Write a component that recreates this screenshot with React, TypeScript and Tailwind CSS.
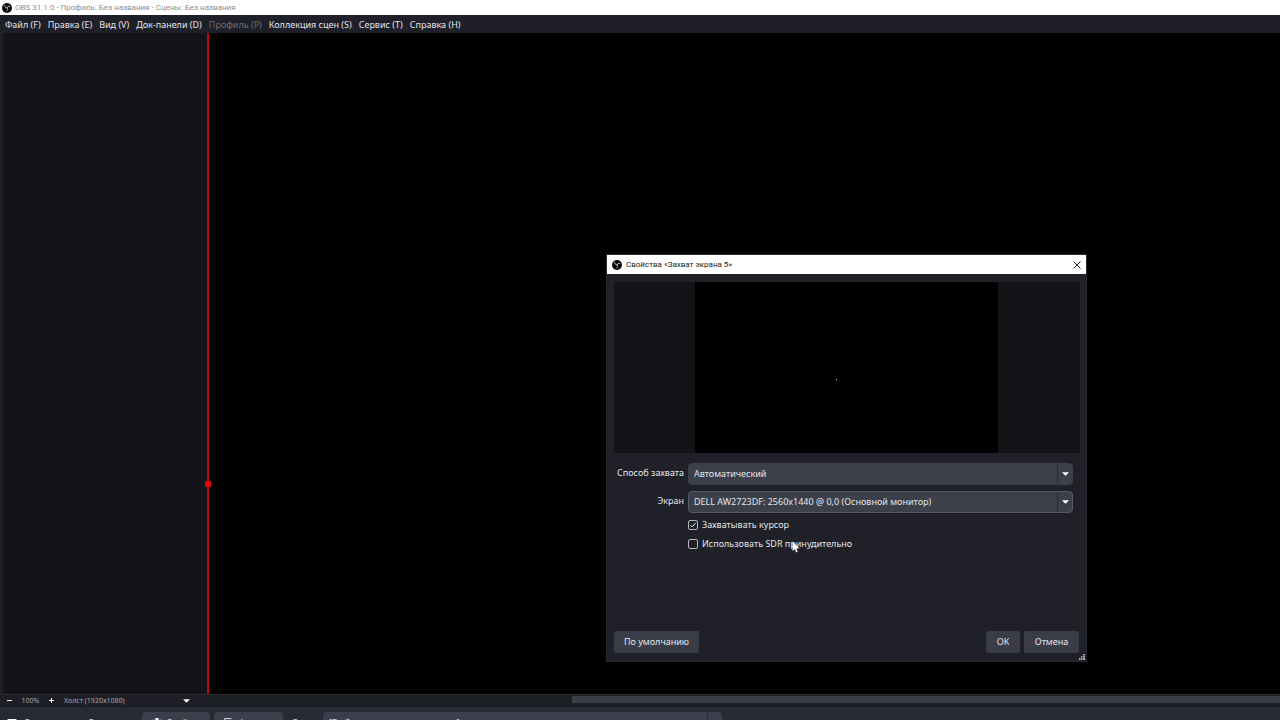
import type { ReactNode } from 'react';

const menuItems = [
  { label: 'Файл (F)' },
  { label: 'Правка (E)' },
  { label: 'Вид (V)' },
  { label: 'Док-панели (D)' },
  { label: 'Профиль (P)', disabled: true },
  { label: 'Коллекция сцен (S)' },
  { label: 'Сервис (T)' },
  { label: 'Справка (H)' },
];

function ObsLogo() {
  return (
    <svg viewBox="0 0 20 20" className="size-[10px] shrink-0" aria-hidden="true">
      <circle cx="10" cy="10" r="10" fill="#0a0a0c" />
      <g fill="none" stroke="#c4c4c6" strokeWidth="1.8" strokeLinecap="round">
        <path d="M5.500 5c-.2 3 1.500 4.700 4.500 4.700" />
        <path d="M15.500 7c-2.800-1-4.800-.1-5.500 2.700" />
        <path d="M9.500 15.500c2.300-1.400 2.500-3.600.5-5.800" />
      </g>
    </svg>
  );
}

function CaretDown() {
  return (
    <svg viewBox="0 0 8 4" className="h-1 w-[7px]" aria-hidden="true">
      <path d="M0 0h8L4 4z" fill="#fff" />
    </svg>
  );
}

function TitleBar() {
  return (
    <header className="flex h-[15px] shrink-0 items-center gap-[3px] bg-white px-0.5 font-['Roboto',sans-serif] text-[8px] text-[#8e8e8e]">
      <ObsLogo />
      <h1>OBS 31.1.0 - Профиль: Без названия - Сцены: Без названия</h1>
    </header>
  );
}

function MenuBar() {
  return (
    <nav className="flex h-[18px] shrink-0 items-center gap-[7px] bg-[#1e1f28] px-[5px] pt-px">
      {menuItems.map((item) => (
        <button
          key={item.label}
          disabled={item.disabled}
          className="whitespace-nowrap text-[#e4e4e8] disabled:text-[#6d6e74]"
        >
          {item.label}
        </button>
      ))}
    </nav>
  );
}

function Preview() {
  return (
    <main className="flex min-h-0 flex-1 bg-[#1e1f28] pl-[3px]">
      <div className="w-[204px] shrink-0 bg-[#131419]" />
      <div className="relative flex-1 border-l-2 border-[#b5080f] bg-black">
        <span className="absolute top-[448px] -left-1 size-[6px] bg-[#e0000c]" />
      </div>
    </main>
  );
}

function ZoomBar() {
  return (
    <div className="flex h-3 shrink-0 border-t border-[#2a2b30] bg-[#1c1f22] text-[7px] leading-[10px] text-[#a6a7ac]">
      <div className="flex w-[208px] shrink-0 items-center bg-[#1d1e26] pl-[7px]">
        <button aria-label="Уменьшить" className="text-white">
          <svg viewBox="0 0 5 5" className="size-[5px]"><path d="M0 2.500h5" stroke="currentColor" /></svg>
        </button>
        <span className="w-[37px] text-center">100%</span>
        <button aria-label="Увеличить" className="text-white">
          <svg viewBox="0 0 5 5" className="size-[5px]"><path d="M0 2.500h5M2.500 0v5" stroke="currentColor" /></svg>
        </button>
        <button className="ml-2.5 flex w-[126px] items-center justify-between">
          Холст (1920x1080)
          <CaretDown />
        </button>
      </div>
      <div className="flex flex-1 pt-px pl-[364px]">
        <div className="h-[7px] flex-1 bg-[#3b3d49]" />
      </div>
    </div>
  );
}

function SourceToolbar() {
  return (
    <div className="flex h-3.5 shrink-0 overflow-hidden border-t border-[#1a1b22] bg-[#272a33] text-[#dcdde2]">
      <div className="flex h-[22px] w-full items-center pt-[9px] pl-[7px]">
        <svg viewBox="0 0 10 10" className="size-2.5 shrink-0" aria-hidden="true">
          <rect x=".8" y="1.800" width="8.400" height="6.400" rx="1" fill="none" stroke="#fff" strokeWidth="1.600" />
        </svg>
        <span className="ml-2 w-[117px] shrink-0">Захват экрана 5</span>
        <button className="flex h-[22px] w-[68px] shrink-0 items-center gap-1 rounded-sm bg-[#3c3e4b] pl-2.5">
          <svg viewBox="0 0 10 10" className="size-2.5 shrink-0" aria-hidden="true">
            <path
              d="M3.500 0h3v1.500l1 .5L9 1.500 10 4 8.500 5 10 6.500 8.500 9 7 8l-.5 2h-3L3 8 1.500 9 0 6.500 1.500 5 0 4 1 1.500 2.500 2l1-.5z"
              fill="#fff"
            />
          </svg>
          Свойства
        </button>
        <button className="ml-1 flex h-[22px] w-[69px] shrink-0 items-center gap-1 rounded-sm bg-[#3c3e4b] pl-2.5">
          <svg viewBox="0 0 10 10" className="size-2.5 shrink-0" aria-hidden="true">
            <path d="M7.500.6H.6v7h2.400M3 9.400V2.500h6.400v6.900zM3 9.400l6-6.500" fill="none" stroke="#dcdde2" />
          </svg>
          Фильтры
        </button>
        <label htmlFor="toolbar-screen" className="ml-2.5 w-[30px] shrink-0">Экран</label>
        <select
          id="toolbar-screen"
          className="h-[22px] w-[399px] shrink-0 appearance-none rounded-sm bg-[#3c3e4b] px-1.5"
        >
          <option>[Выберите экран для захвата]</option>
        </select>
        <span className="-ml-[15px] h-[22px] w-px bg-[#2b2d37]" />
      </div>
    </div>
  );
}

function SelectRow({ id, label, value, focused }: { id: string; label: string; value: string; focused?: boolean }) {
  return (
    <div className="flex h-[22px] items-center gap-1">
      <label htmlFor={id} className="w-[70px] shrink-0 pb-0.5 text-right">
        {label}
      </label>
      <div
        className={`relative h-[22px] flex-1 rounded-sm border ${
          focused ? 'border-[#555968] bg-[#3c404b]' : 'border-[#3c404b] bg-[#3c404b]'
        }`}
      >
        <select id={id} className="block h-5 w-full appearance-none pr-5 pl-[5px] outline-none">
          <option>{value}</option>
        </select>
        <span className="pointer-events-none absolute inset-y-0 right-0 flex w-[15px] items-center justify-center border-l border-[#292c36]">
          <CaretDown />
        </span>
      </div>
    </div>
  );
}

function CheckRow({ label, checked }: { label: string; checked?: boolean }) {
  return (
    <label className="flex h-3 items-center gap-1">
      <span className="relative flex">
        <input
          type="checkbox"
          defaultChecked={checked}
          className="peer size-2.5 appearance-none rounded-xs border border-[#b4b5bb]"
        />
        <svg
          viewBox="0 0 10 10"
          className="pointer-events-none absolute inset-0 hidden size-2.5 peer-checked:block"
          aria-hidden="true"
        >
          <path d="M2.500 5.200l1.700 1.700 3.500-4" fill="none" stroke="#e8e8ec" />
        </svg>
      </span>
      {label}
    </label>
  );
}

function DialogButton({ className, children }: { className: string; children: ReactNode }) {
  return <button className={`h-[22px] rounded-xs bg-[#3a3d48] ${className}`}>{children}</button>;
}

function PropertiesDialog() {
  return (
    <section
      role="dialog"
      aria-labelledby="dialog-title"
      className="absolute top-[254px] left-[606px] flex h-[408px] w-[481px] flex-col border border-[#2a2a2e] bg-[#1f2028] text-[#e4e4e8]"
    >
      <div className="flex h-[19px] shrink-0 items-center gap-1 bg-white px-[5px] font-['Roboto',sans-serif] text-[8px] text-[#222]">
        <ObsLogo />
        <h2 id="dialog-title" className="flex-1">Свойства «Захват экрана 5»</h2>
        <button aria-label="Закрыть">
          <svg viewBox="0 0 8 8" className="size-2" aria-hidden="true">
            <path d="M.5.5l7 7M7.500.5l-7 7" stroke="#222" fill="none" />
          </svg>
        </button>
      </div>
      <div className="flex flex-1 flex-col pt-2 pr-1.5 pb-2 pl-[7px]">
        <div className="flex h-[171px] justify-center bg-[#131418] pr-px">
          <div className="flex w-[303px] items-center justify-center bg-black">
            <span className="mt-6 mr-5 size-px bg-[#c8c8c8]" />
          </div>
        </div>
        <form className="mt-2.5 flex flex-col gap-1.5 pr-[7px]">
          <SelectRow id="capture-method" label="Способ захвата" value="Автоматический" />
          <SelectRow id="display" label="Экран" value="DELL AW2723DF: 2560x1440 @ 0,0 (Основной монитор)" focused />
          <div className="flex flex-col items-start gap-[7px] pl-[74px]">
            <CheckRow label="Захватывать курсор" checked />
            <CheckRow label="Использовать SDR принудительно" />
          </div>
        </form>
        <div className="mt-auto flex gap-1 pr-px">
          <DialogButton className="mr-auto w-[85px]">По умолчанию</DialogButton>
          <DialogButton className="w-[34px]">OK</DialogButton>
          <DialogButton className="w-[55px]">Отмена</DialogButton>
        </div>
      </div>
      <svg viewBox="0 0 6 6" className="absolute right-px bottom-px size-1.5" aria-hidden="true">
        <path d="M4 0h2v6H0V4h2V2h2z" fill="#a9a9ad" />
        <path d="M0 3.500h6M0 1.500h6M1.500 0v6M3.500 0v6" stroke="#1f2028" strokeWidth=".5" />
      </svg>
    </section>
  );
}

function Cursor() {
  return (
    <svg viewBox="0 0 8 12" className="pointer-events-none absolute top-[541px] left-[792px] h-3 w-2" aria-hidden="true">
      <path d="M.5.5v9.500l2.200-2 1.500 3.500 1.500-.7-1.500-3.300h3.300z" fill="#fff" />
    </svg>
  );
}

export default function App() {
  return (
    <div className="relative flex h-screen flex-col overflow-hidden bg-[#1e1f28] font-['Noto_Sans',sans-serif] text-[9px] leading-3">
      <TitleBar />
      <MenuBar />
      <Preview />
      <ZoomBar />
      <SourceToolbar />
      <PropertiesDialog />
      <Cursor />
    </div>
  );
}
